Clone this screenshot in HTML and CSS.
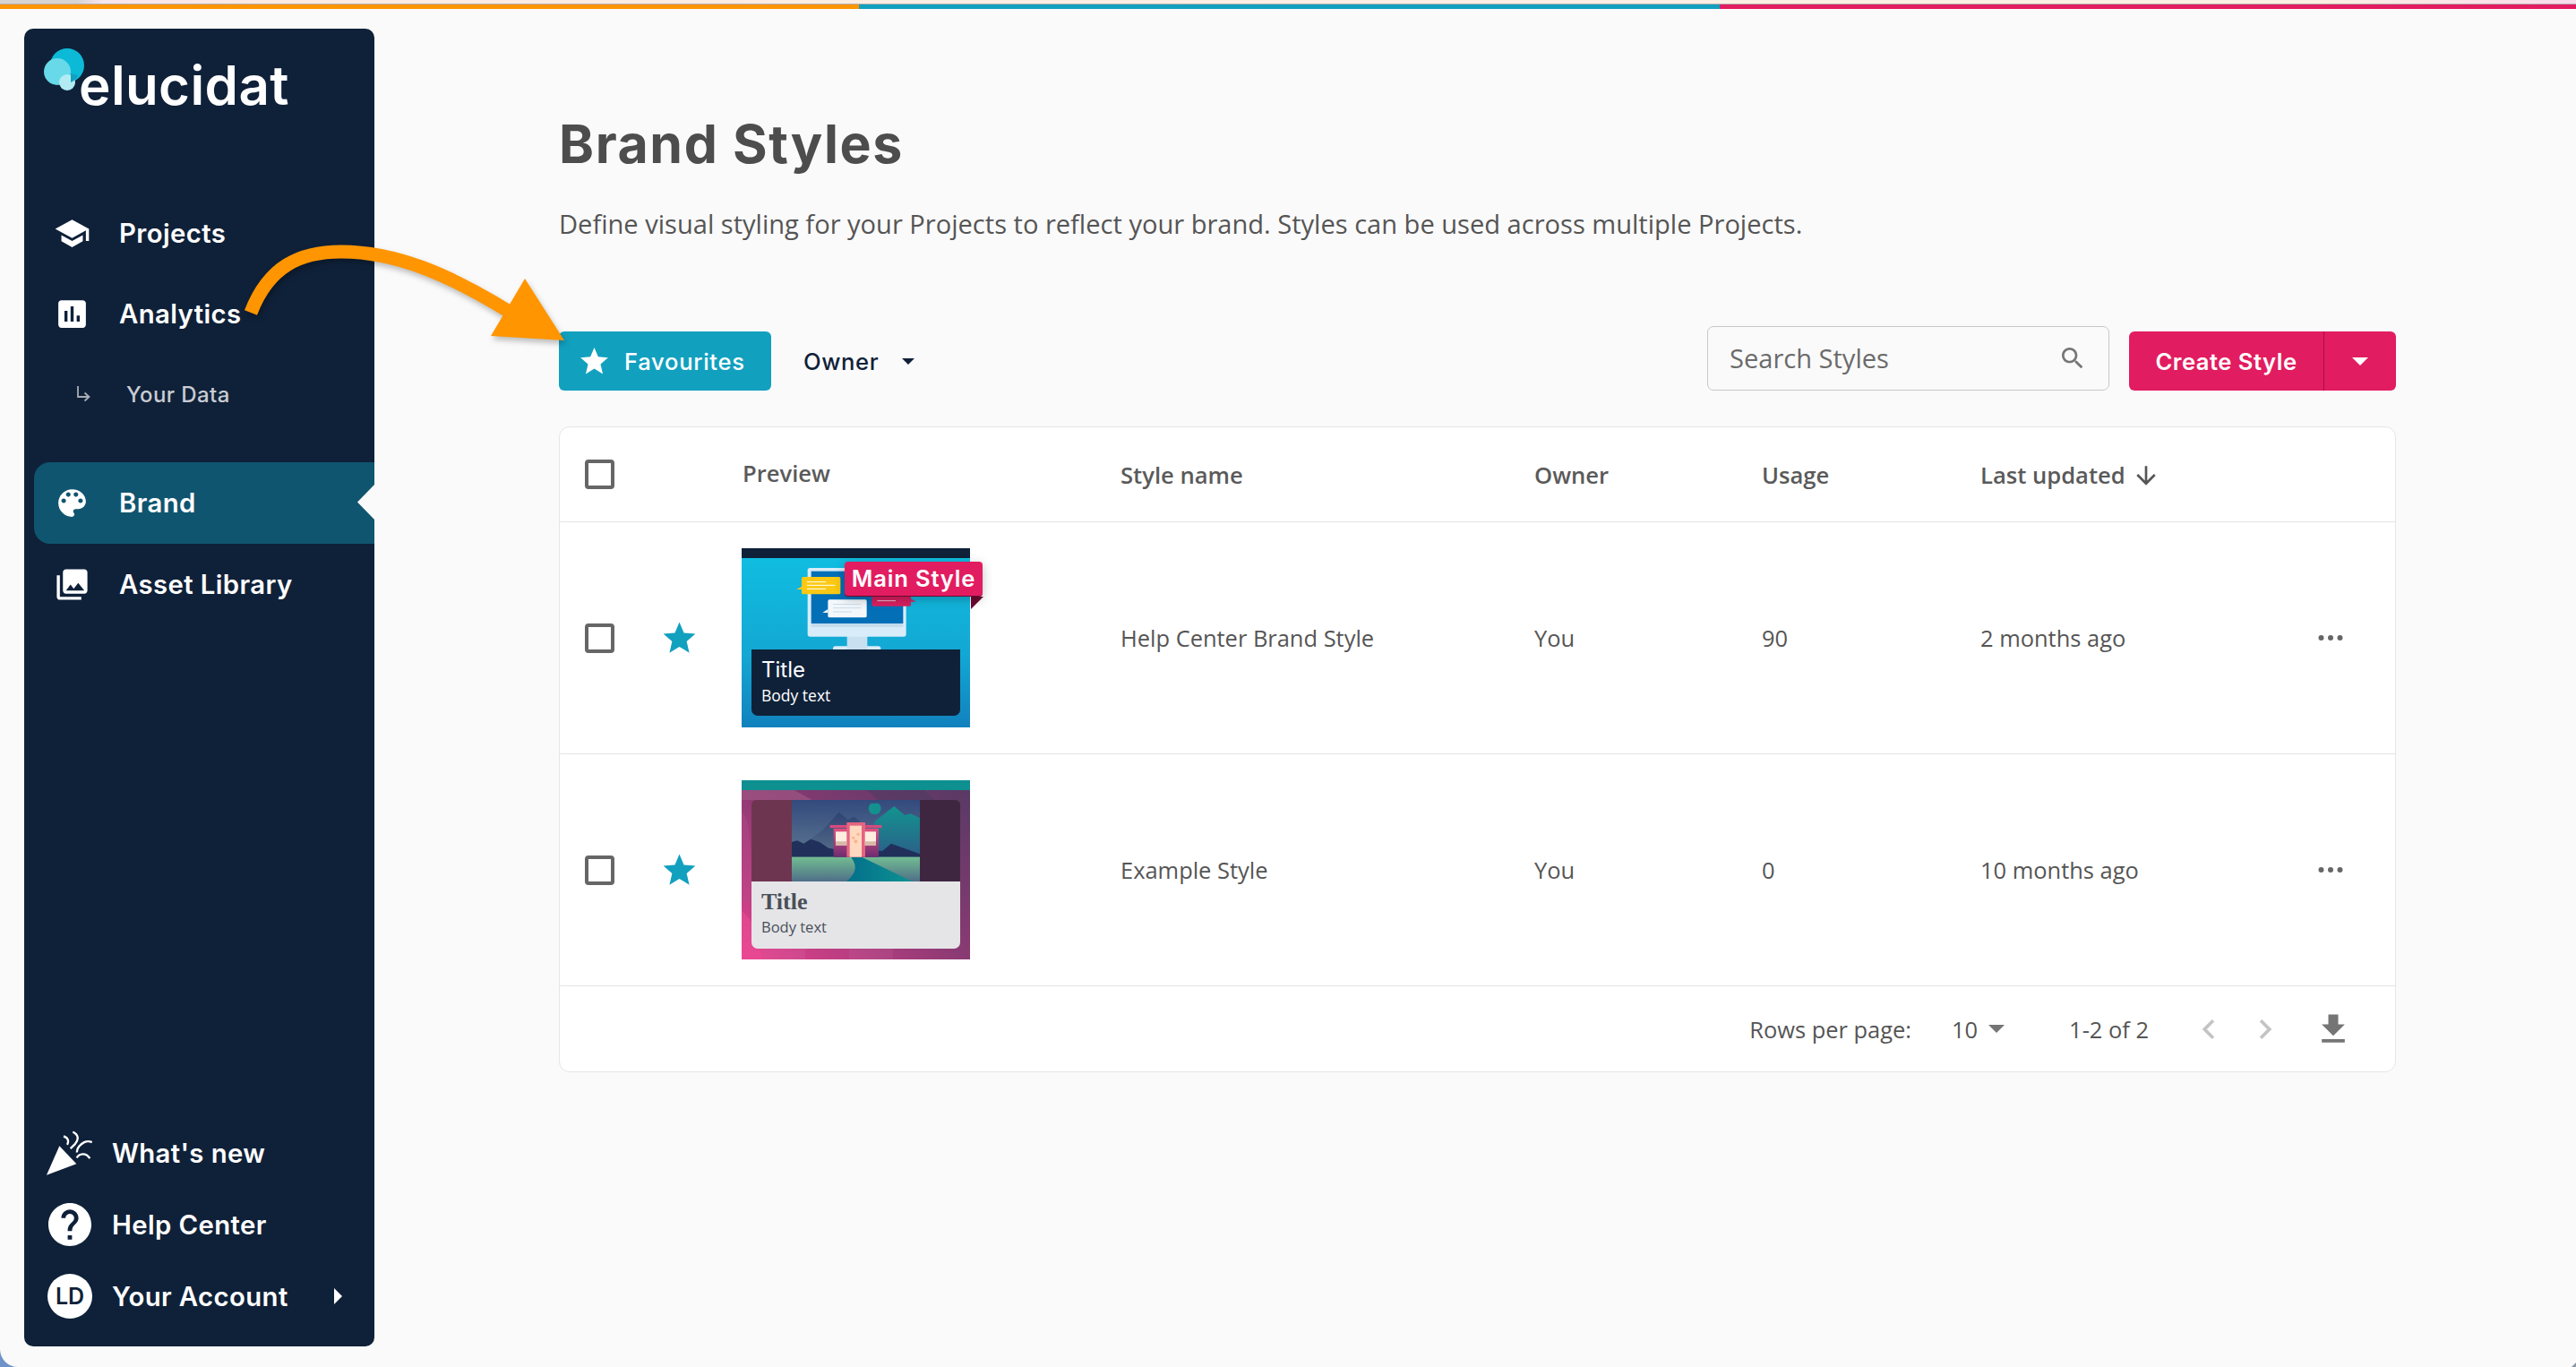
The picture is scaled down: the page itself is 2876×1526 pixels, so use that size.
FILE: index.html
```html
<!DOCTYPE html>
<html lang="en">
<head>
<meta charset="utf-8">
<title>Brand Styles</title>
<link rel="stylesheet" href="styles.css">
</head>
<body>
<div class="topstrip"><div class="pastel"></div><div class="bars"><span class="bar-o"></span><span class="bar-b"></span><span class="bar-p"></span></div></div>
<div class="app">
  <aside class="sidebar">
    <div class="logo">
      <svg class="logo-mark" viewBox="0 0 50 50"><circle cx="27" cy="20" r="19" fill="#0cbad8"/><circle cx="16" cy="27" r="15" fill="#67d9e8"/><circle cx="27" cy="39" r="9" fill="#b3ebf3"/><path d="M31 39a15 15 0 0 0 8-8l-8-2z" fill="#12a0bf"/></svg>
      <span class="logo-text">elucidat</span>
    </div>
    <nav class="nav">
      <a class="nav-item"><svg class="nav-icon" viewBox="0 0 24 24"><path d="M5 13.18v4L12 21l7-3.82v-4L12 17l-7-3.82zM12 3L1 9l11 6 9-4.91V17h2V9L12 3z"/></svg><span>Projects</span></a>
      <a class="nav-item"><svg class="nav-icon" viewBox="0 0 24 24"><path d="M19 3H5c-1.1 0-2 .9-2 2v14c0 1.1.9 2 2 2h14c1.1 0 2-.9 2-2V5c0-1.1-.9-2-2-2zM9 17H7v-7h2v7zm4 0h-2V7h2v10zm4 0h-2v-4h2v4z"/></svg><span>Analytics</span></a>
      <a class="nav-item nav-sub"><svg class="sub-icon" viewBox="0 0 16 18"><path d="M2 0v12h12M9.500 7.500l5 4.500-5 4.500" fill="none" stroke="#a9adb5" stroke-width="1.800"/></svg><span>Your Data</span></a>
      <a class="nav-item nav-active"><svg class="nav-icon" viewBox="0 0 24 24"><path d="M12 3c-4.970 0-9 4.030-9 9s4.030 9 9 9c.83 0 1.500-.67 1.500-1.500 0-.39-.15-.74-.39-1.010-.23-.26-.38-.61-.38-.99 0-.83.67-1.500 1.500-1.500H16c2.760 0 5-2.240 5-5 0-4.420-4.030-8-9-8zm-5.500 9c-.83 0-1.500-.67-1.500-1.500S5.670 9 6.500 9 8 9.670 8 10.500 7.330 12 6.500 12zm3-4C8.670 8 8 7.330 8 6.500S8.670 5 9.500 5s1.500.67 1.500 1.500S10.330 8 9.500 8zm5 0c-.83 0-1.500-.67-1.500-1.500S13.670 5 14.500 5s1.500.67 1.500 1.500S15.330 8 14.500 8zm3 4c-.83 0-1.500-.67-1.500-1.500S16.670 9 17.500 9s1.500.67 1.500 1.500-.67 1.500-1.500 1.500z"/></svg><span>Brand</span><i class="notch"></i></a>
      <a class="nav-item"><svg class="nav-icon" viewBox="0 0 24 24"><path d="M22 16V4c0-1.100-.9-2-2-2H8c-1.100 0-2 .9-2 2v12c0 1.100.9 2 2 2h12c1.100 0 2-.9 2-2zm-11-4l2.030 2.710L16 11l4 5H8l3-4zM2 6v14c0 1.100.9 2 2 2h14v-2H4V6H2z"/></svg><span>Asset Library</span></a>
    </nav>
    <div class="nav-bottom">
      <a class="bottom-item"><span class="bottom-icon"><svg class="popper" viewBox="150 60 180 170"><path d="M162 218L205 120L262 180z" fill="#fff"/><path d="M219 88c16 4 18 18 12 28M250 73c20 10 20 26 8 40l-16 16M264 142c-2-14 12-28 24-34 8-4 18-4 26 0M263 160c8-14 30-20 44 2" fill="none" stroke="#fff" stroke-width="7"/></svg></span><span>What's new</span></a>
      <a class="bottom-item"><span class="bottom-icon"><svg viewBox="2 2 20 20" width="48" height="48"><path fill="#fff" d="M12 2C6.480 2 2 6.480 2 12s4.480 10 10 10 10-4.480 10-10S17.520 2 12 2zm1 17h-2v-2h2v2zm2.070-7.750l-.9.920C13.450 12.900 13 13.500 13 15h-2v-.5c0-1.100.45-2.100 1.170-2.830l1.240-1.260c.37-.36.59-.86.59-1.410 0-1.100-.9-2-2-2s-2 .9-2 2H8c0-2.210 1.790-4 4-4s4 1.790 4 4c0 .88-.36 1.680-.93 2.250z"/></svg></span><span>Help Center</span></a>
      <a class="bottom-item"><span class="bottom-icon"><b class="avatar">LD</b></span><span>Your Account</span><i class="acct-arrow"></i></a>
    </div>
  </aside>

  <main class="main">
    <h1 class="title">Brand Styles</h1>
    <p class="subtitle">Define visual styling for your Projects to reflect your brand. Styles can be used across multiple Projects.</p>

    <div class="toolbar">
      <div class="tool-left">
        <button class="btn-fav"><svg class="fav-star" viewBox="0 0 24 24"><path d="M12 17.270L18.180 21l-1.640-7.030L22 9.240l-7.190-.61L12 2 9.190 8.630 2 9.240l5.460 4.730L5.820 21z"/></svg>Favourites</button>
        <button class="btn-owner">Owner<i class="caret-dark"></i></button>
      </div>
      <div class="tool-right">
        <div class="search"><span>Search Styles</span><svg class="search-icon" viewBox="0 0 24 24"><path d="M15.500 14h-.79l-.28-.27C15.410 12.590 16 11.110 16 9.500 16 5.910 13.090 3 9.500 3S3 5.910 3 9.500 5.910 16 9.500 16c1.610 0 3.090-.59 4.230-1.570l.27.28v.79l5 4.990L20.490 19l-4.990-5zm-6 0C7.010 14 5 11.990 5 9.500S7.010 5 9.500 5 14 7.010 14 9.500 11.990 14 9.500 14z"/></svg></div>
        <div class="btn-create"><span class="create-label">Create Style</span><span class="create-drop"><i class="caret-white"></i></span></div>
      </div>
    </div>

    <section class="table">
      <div class="row head">
        <span class="checkbox"></span><span></span>
        <span class="head-preview">Preview</span>
        <span>Style name</span><span>Owner</span><span>Usage</span>
        <span class="sorted">Last updated<svg class="sort-icon" viewBox="0 0 24 24"><path d="M20 12l-1.410-1.410L13 16.170V4h-2v12.170l-5.580-5.590L4 12l8 8 8-8z"/></svg></span>
        <span></span>
      </div>

      <div class="row body-row">
        <span class="checkbox"></span>
        <svg class="row-star" viewBox="0 0 24 24"><path d="M12 17.270L18.180 21l-1.640-7.030L22 9.240l-7.190-.61L12 2 9.190 8.630 2 9.240l5.460 4.730L5.820 21z"/></svg>
        <div class="preview preview-a">
          <svg class="art" viewBox="54 36 765 600">
            <rect x="360" y="364" width="160" height="40" rx="8" fill="#d8ebf9"/>
            <rect x="407" y="320" width="68" height="60" fill="#c9e0f1"/>
            <rect x="275" y="102" width="330" height="230" rx="8" fill="#d9ecf9"/>
            <rect x="287" y="113" width="308" height="175" fill="#026fb7"/>
            <rect x="287" y="288" width="308" height="12" fill="#c3dcee"/>
            <path d="M255 165l-18 9 18 0z" fill="#fbc913"/>
            <rect x="255" y="132" width="130" height="58" rx="5" fill="#fbc913"/>
            <path d="M273 149h63M273 160h94M273 172h63" stroke="#fff" stroke-width="3"/>
            <path d="M343 240l-18 12 18 0z" fill="#f4f8fb"/>
            <rect x="343" y="208" width="130" height="60" rx="5" fill="#f4f8fb"/>
            <path d="M360 224h94M360 236h94M360 249h63" stroke="#c6dcee" stroke-width="3"/>
            <path d="M620 205l18 10h-18z" fill="#d81f60"/>
            <rect x="490" y="180" width="131" height="50" rx="5" fill="#d81f60"/>
            <path d="M508 212h62" stroke="#e8c4d2" stroke-width="3"/>
          </svg>
          <div class="card card-a"><div class="card-title">Title</div><div class="card-body">Body text</div></div>
          <i class="fold"></i>
          <span class="badge">Main Style</span>
        </div>
        <span>Help Center Brand Style</span><span>You</span><span>90</span><span>2 months ago</span>
        <svg class="dots" viewBox="0 0 24 24"><circle cx="5" cy="12" r="2"/><circle cx="12" cy="12" r="2"/><circle cx="19" cy="12" r="2"/></svg>
      </div>

      <div class="row body-row">
        <span class="checkbox"></span>
        <svg class="row-star" viewBox="0 0 24 24"><path d="M12 17.270L18.180 21l-1.640-7.030L22 9.240l-7.190-.61L12 2 9.190 8.630 2 9.240l5.460 4.730L5.820 21z"/></svg>
        <div class="preview preview-b">
          <svg class="art" viewBox="54 33 765 600">
            <defs>
              <linearGradient id="bgb" x1="0" y1="1" x2="1" y2="0"><stop offset="0" stop-color="#e8418f"/><stop offset=".5" stop-color="#8a3a73"/><stop offset="1" stop-color="#553a63"/></linearGradient>
              <linearGradient id="sky" x1="0" y1="0" x2="0" y2="1"><stop offset="0" stop-color="#334a7d"/><stop offset="1" stop-color="#6f8b99"/></linearGradient>
              <linearGradient id="mtn" x1="0" y1="0" x2="0" y2="1"><stop offset="0" stop-color="#2f4272"/><stop offset="1" stop-color="#6a8496"/></linearGradient>
              <linearGradient id="teal" x1="0" y1="0" x2="0" y2="1"><stop offset="0" stop-color="#12948f"/><stop offset="1" stop-color="#2c5e88"/></linearGradient>
              <linearGradient id="grass" x1="0" y1="0" x2="0" y2="1"><stop offset="0" stop-color="#72bd92"/><stop offset="1" stop-color="#4f6f88"/></linearGradient>
              <linearGradient id="road" x1="0" y1="0" x2="1" y2="0"><stop offset="0" stop-color="#036f8b"/><stop offset="1" stop-color="#0e9292"/></linearGradient>
              <linearGradient id="house" x1="0" y1="0" x2="0" y2="1"><stop offset="0" stop-color="#e0527f"/><stop offset="1" stop-color="#6e2c72"/></linearGradient>
              <clipPath id="skyclip"><rect x="222" y="110" width="429" height="180"/></clipPath>
            </defs>
            <rect x="54" y="33" width="765" height="600" fill="url(#bgb)"/>
            <path d="M54 66H230l60 33H54z" fill="#a25a85" opacity=".6"/>
            <path d="M475 66h190l60 60H540z" fill="#4a3a60" opacity=".5"/>
            <path d="M54 140c40 20 33 250 33 300H54z" fill="#b54c8a" opacity=".35"/>
            <path d="M54 470c50 40 70 110 70 163H54z" fill="#ee4f96" opacity=".5"/>
            <path d="M124 633V597h143v36zM414 633V597h146v36z" fill="#fff" opacity=".05"/>
            <path d="M87 115a16 16 0 0 1 16-16H222V372H87z" fill="#6e3550"/>
            <path d="M651 99h119a16 16 0 0 1 16 16V372H651z" fill="#3f2640"/>
            <rect x="222" y="99" width="429" height="273" fill="url(#sky)"/>
            <circle cx="500" cy="127" r="21" fill="#14908f" clip-path="url(#skyclip)"/>
            <path d="M222 240l18-5 22 10 23-15 40-30 55-60 30 25 20-10 20 15 60 180H222z" fill="url(#mtn)"/>
            <path d="M500 170l65-50 35 30 20-5 31 15V290H470z" fill="url(#teal)"/>
            <path d="M222 240l18-5 22 10 23-15 30 10 30 20 60 10 60-5 60 5 30-25 96 35v10H222z" fill="#20305a"/>
            <rect x="222" y="290" width="429" height="82" fill="url(#grass)"/>
            <path d="M420 290h36l169 82H405c30-25 40-50 15-82z" fill="url(#road)"/>
            <path d="M362 195h151v95H362z" fill="url(#house)"/>
            <path d="M350 183h173v10H350z" fill="#d84a7c"/>
            <rect x="406" y="174" width="62" height="116" fill="#e6647f"/>
            <rect x="416" y="185" width="40" height="105" fill="#ffd8bf"/>
            <rect x="369" y="205" width="37" height="46" fill="#ffeee0"/>
            <rect x="467" y="205" width="37" height="46" fill="#ffeee0"/>
            <path d="M369 238h37v13h-37zM467 238h37v13h-37z" fill="#d8b8a8"/>
            <circle cx="428" cy="226" r="5" fill="#f8b48e"/><circle cx="436" cy="238" r="6" fill="#f8b48e"/><circle cx="444" cy="214" r="5" fill="#f8b48e"/>
          </svg>
          <div class="card card-b"><div class="card-title serif">Title</div><div class="card-body">Body text</div></div>
        </div>
        <span>Example Style</span><span>You</span><span>0</span><span>10 months ago</span>
        <svg class="dots" viewBox="0 0 24 24"><circle cx="5" cy="12" r="2"/><circle cx="12" cy="12" r="2"/><circle cx="19" cy="12" r="2"/></svg>
      </div>

      <div class="pager">
        <span class="rows-label">Rows per page:</span>
        <span class="rows-value">10<i class="caret-gray"></i></span>
        <span class="range">1-2 of 2</span>
        <svg class="page-icon" viewBox="0 0 24 24"><path d="M15.410 7.410L14 6l-6 6 6 6 1.410-1.410L10.830 12z"/></svg>
        <svg class="page-icon next" viewBox="0 0 24 24"><path d="M10 6L8.590 7.410 13.170 12l-4.580 4.590L10 18l6-6z"/></svg>
        <svg class="download" viewBox="0 0 24 24"><path d="M19 9h-4V3H9v6H5l7 7 7-7zM5 18v2h14v-2H5z"/></svg>
      </div>
    </section>
  </main>
</div>

<svg class="callout" viewBox="0 0 2876 1526">
  <path d="M280 349C300 297 335 281 381 281C440 281 500 305 572 350" fill="none" stroke="#ff9500" stroke-width="15"/>
  <path d="M630 380L586 311L548 375z" fill="#ff9500"/>
</svg>
<i class="corner"></i>
<i class="corner-right"></i>
</body>
</html>
```

FILE: styles.css
```css
* { box-sizing: border-box; }
html, body { margin: 0; height: 100%; }
body {
  width: 2876px;
  height: 1526px;
  overflow: hidden;
  position: relative;
  background: #fafafa;
  font-family: "Open Sans", "Liberation Sans", sans-serif;
  color: #555;
  display: flex;
  flex-direction: column;
}
a { display: flex; color: inherit; text-decoration: none; }
i { display: block; }

.topstrip { flex: none; height: 10px; }
.pastel { height: 4px; background: linear-gradient(90deg, #d8d4d4 0, #d8d4d4 3%, #f8e6ee 4%, #fbeae2 10%, #faefe2 50%, #faefe2 90%, #fbe0e8 97%, #f8dcea 100%); }
.bars { height: 6px; display: flex; border-top: 1px solid #b5adad; }
.bar-o { flex: 0 0 959px; background: #ff9500; }
.bar-b { flex: 0 0 961px; background: #12a0bf; }
.bar-p { flex: 1; background: #e21c60; }

.app { flex: 1; display: flex; padding: 22px 0 23px 27px; min-height: 0; }

/* sidebar */
.sidebar {
  flex: none;
  width: 391px;
  background: #0f2139;
  border-radius: 10px;
  color: #fff;
  display: flex;
  flex-direction: column;
  font-family: Inter, "Liberation Sans", sans-serif;
  font-weight: 600;
  font-size: 29.3px;
  letter-spacing: .4px;
}
.logo { position: relative; height: 183px; padding: 27px 0 0 61px; }
.logo-mark { position: absolute; left: 21px; top: 21px; width: 50px; height: 50px; }
.logo-text { position: relative; font-size: 60px; line-height: 72px; font-weight: 600; letter-spacing: .4px; color: #fff; }
.nav { padding-left: 11px; }
.nav-item { position: relative; height: 90px; align-items: center; padding-left: 22px; gap: 32px; }
.nav-icon { width: 41px; height: 41px; fill: #fff; flex: none; }
.nav-sub { padding-left: 47px; gap: 40px; font-size: 24px; color: #c9ccd2; font-weight: 500; margin-bottom: 31px; }
.sub-icon { width: 16px; height: 18px; flex: none; }
.nav-active { height: 91px; background: #10556f; border-radius: 18px 0 0 18px; }
.notch { position: absolute; right: 0; top: 25px; width: 19px; height: 39px; background: #fafafa; clip-path: polygon(100% 0, 0 50%, 100% 100%); }
.nav-bottom { margin-top: auto; padding: 0 0 16px 25px; }
.bottom-item { height: 80px; align-items: center; gap: 21px; }
.bottom-icon { width: 52px; display: flex; justify-content: center; align-items: center; flex: none; }
.popper { width: 60px; height: 57px; flex: none; }
.avatar { width: 50px; height: 50px; border-radius: 50%; background: #fff; color: #0f2139; display: flex; align-items: center; justify-content: center; font-size: 25px; font-weight: 600; letter-spacing: 0; }
.acct-arrow { margin-left: 30px; width: 0; height: 0; border-left: 9px solid #fff; border-top: 9px solid transparent; border-bottom: 9px solid transparent; }

/* main */
.main { flex: 1; min-width: 0; padding: 94px 201px 0 206px; }
.title { margin: 0; font-family: Inter, "Liberation Sans", sans-serif; font-size: 59px; line-height: 70px; font-weight: 700; color: #4d4d4d; letter-spacing: 1.6px; }
.subtitle { margin: 34px 0 94px; font-size: 29.07px; line-height: 40px; color: #555; }

.toolbar { display: flex; justify-content: space-between; align-items: flex-end; height: 72px; margin-bottom: 40px; }
.tool-left { display: flex; align-items: center; height: 66px; }
.btn-fav {
  width: 237px; height: 66px; border: 0; border-radius: 6px; background: #12a0bf; color: #fff;
  display: flex; align-items: center; padding: 0 0 0 21px; gap: 15px;
  font: 500 25.6px Inter, "Liberation Sans", sans-serif; letter-spacing: .7px;
}
.fav-star { width: 37px; height: 37px; fill: #fff; flex: none; }
.btn-owner {
  border: 0; background: none; padding: 0; margin-left: 36px; color: #0f2139;
  display: flex; align-items: center; font: 500 25.6px Inter, "Liberation Sans", sans-serif; letter-spacing: .6px;
}
.caret-dark { margin-left: 26px; border-top: 7px solid #0f2139; border-left: 7.5px solid transparent; border-right: 7.5px solid transparent; }
.tool-right { display: flex; align-items: flex-end; gap: 22px; }
.search {
  width: 449px; height: 72px; border: 1.5px solid #c8c8c8; border-radius: 7px;
  display: flex; align-items: center; justify-content: space-between; padding: 0 24px 0 24px;
  font-size: 29.07px; color: #6b6b6b;
}
.search-icon { width: 32px; height: 32px; fill: #757575; }
.btn-create {
  width: 298px; height: 66px; border-radius: 6px; background: #e21c60; color: #fff;
  display: flex; font: 600 25.6px Inter, "Liberation Sans", sans-serif; letter-spacing: .5px;
}
.create-label { width: 218px; display: flex; align-items: center; justify-content: center; border-right: 1px solid #a01248; }
.create-drop { flex: 1; display: flex; align-items: center; justify-content: center; }
.caret-white { border-top: 9px solid #fff; border-left: 9px solid transparent; border-right: 9px solid transparent; }

/* table */
.table { background: #fff; border: 1.5px solid #e6e6e6; border-radius: 12px; font-size: 25.45px; color: #555; }
.row {
  display: grid;
  grid-template-columns: 87px 89px 422px 462px 254px 244px 373px 1fr;
  align-items: center;
  padding-left: 28px;
  border-bottom: 1.5px solid #e4e4e4;
}
.head { height: 106px; padding-top: 2px; font-weight: 600; font-size: 25.6px; color: #5a5a5a; }
.head .checkbox { margin-bottom: 2px; }
.head-preview { margin-bottom: 4px; }
.sorted { display: flex; align-items: center; gap: 7px; }
.sort-icon { width: 32px; height: 32px; fill: #555; }
.body-row { height: 259px; }
.checkbox { display: block; width: 33px; height: 33px; border: 4px solid #666; border-radius: 4px; background: #fff; }
.row-star { width: 43px; height: 43px; margin-left: -3px; fill: #12a0bf; }
.dots { width: 36px; height: 36px; fill: #666; }

.preview { position: relative; width: 255px; height: 200px; padding: 113px 11px 13px; margin-left: -1px; }
.preview-a { background: linear-gradient(180deg, #0f2139 0, #0f2139 11px, #10bde0 11px, #13a7d3 60%, #1181bd 100%); }
.preview-b { padding-top: 113px; background: linear-gradient(180deg, #0e8f90 0, #0e8f90 11px, transparent 11px); }
.art { position: absolute; left: 0; top: 0; width: 255px; height: 200px; }
.preview-a .art { top: 0; }
.preview-b .art { clip-path: inset(11px 0 0 0); }
.card { position: relative; height: 74px; padding: 7px 11px 0; font-family: "Open Sans", "Liberation Sans", sans-serif; }
.card-a { background: #0f2139; color: #fff; border-radius: 0 0 7px 7px; }
.card-b { height: 75px; background: #e5e5e8; color: #4a4f58; border-radius: 0 0 7px 7px; }
.card-title { font-size: 24px; line-height: 32px; font-family: Inter, "Liberation Sans", sans-serif; font-weight: 400; }
.card-title.serif { font-family: "Liberation Serif", serif; font-weight: 700; font-size: 26px; }
.card-body { font-size: 17.5px; line-height: 24px; }
.card-b .card-body { font-size: 16.5px; }
.badge {
  position: absolute; left: 115px; top: 15px; width: 154px; height: 39px; border-radius: 4px;
  background: #e21c60; color: #fff; border-bottom: 1px solid #6d0a33;
  font: 600 25.6px/38px Inter, "Liberation Sans", sans-serif; letter-spacing: .8px; text-align: center;
  box-shadow: 0 3px 12px rgba(0, 0, 0, .25);
}
.fold { position: absolute; left: 256px; top: 54px; width: 14px; height: 14px; background: #6d0a33; clip-path: polygon(0 0, 100% 0, 0 100%); }

.pager { height: 95px; display: flex; align-items: center; justify-content: flex-end; padding-right: 47px; font-size: 25.45px; color: #555; }
.rows-value { margin-left: 45px; display: flex; align-items: center; gap: 12px; }
.caret-gray { border-top: 9px solid #757575; border-left: 9px solid transparent; border-right: 9px solid transparent; }
.range { margin-left: 72px; }
.page-icon { width: 44px; height: 44px; fill: #c4c4c4; margin-left: 45px; }
.page-icon.next { margin-left: 19px; }
.download { width: 44px; height: 44px; fill: #757575; margin-left: 32px; }

/* overlays */
.callout { position: absolute; left: 0; top: 0; width: 2876px; height: 1526px; pointer-events: none; filter: drop-shadow(2px 4px 3px rgba(0, 0, 0, .25)); }
.corner { position: absolute; left: 0; bottom: 0; width: 20px; height: 20px; background: #6d93c8; clip-path: path("M0 0V20H20A20 20 0 0 1 0 0z"); }
.corner-right { position: absolute; right: 0; bottom: 0; width: 5px; height: 5px; background: #8d96a3; clip-path: polygon(100% 0, 100% 100%, 0 100%); }
```
